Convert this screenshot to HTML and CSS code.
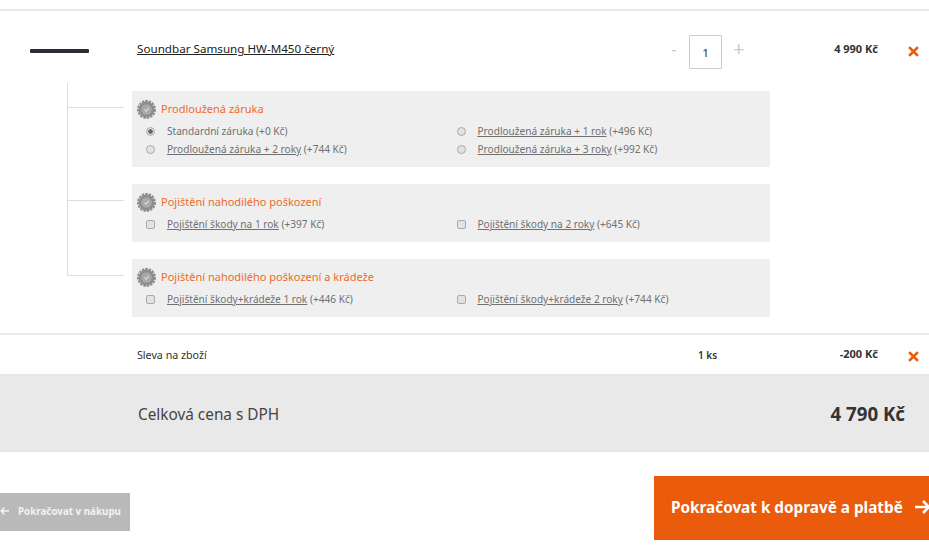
FILE: index.html
```html
<!DOCTYPE html>
<html lang="cs">
<head>
    <meta charset="UTF-8">
    <title>Košík</title>
    <link rel="stylesheet" href="styles.css">
</head>
<body>
    <svg class="sprite" width="0" height="0">
        <symbol id="gear" viewBox="0 0 20 20">
            <circle cx="10" cy="10" r="8.300" fill="#8d8d8d"/>
            <circle cx="10" cy="10" r="9" fill="none" stroke="#8d8d8d" stroke-width="2" stroke-dasharray="2.600 1.110"/>
            <circle cx="10" cy="10" r="5.500" fill="#a9a9a9"/>
            <path fill="none" stroke="#dcdcdc" stroke-width="1.100" d="M7.800 10l1.700 1.800 3-3.500"/>
        </symbol>
        <symbol id="cross" viewBox="0 0 12 12">
            <path fill="none" stroke="#ea5b0c" stroke-width="3" d="M1.200 1.200l9.600 9.600M10.800 1.200l-9.600 9.600"/>
        </symbol>
        <symbol id="arrow" viewBox="0 0 16 14">
            <path fill="none" stroke="currentColor" stroke-width="2.600" d="M0 7h14M8 1l6 6-6 6"/>
        </symbol>
    </svg>

    <section class="cart">
        <div class="item-row">
            <div class="item-thumb"><span class="soundbar"></span></div>
            <a class="item-name" href="#">Soundbar Samsung HW-M450 černý</a>
            <div class="qty">
                <span class="qty-btn qty-minus">-</span>
                <span class="qty-box">1</span>
                <span class="qty-btn">+</span>
            </div>
            <div class="item-price">4 990 Kč</div>
            <svg class="remove"><use href="#cross"/></svg>
        </div>

        <div class="services">
            <div class="tree">
                <span class="branch branch-1"></span>
                <span class="branch branch-2"></span>
                <span class="branch branch-3"></span>
            </div>
            <div class="panels">
                <div class="panel">
                    <h3 class="panel-title"><svg class="gear"><use href="#gear"/></svg>Prodloužená záruka</h3>
                    <div class="choices">
                        <label class="choice"><span class="mark radio on"></span><span>Standardní záruka (+0 Kč)</span></label>
                        <label class="choice"><span class="mark radio"></span><span><a href="#">Prodloužená záruka + 1 rok</a> (+496 Kč)</span></label>
                        <label class="choice"><span class="mark radio"></span><span><a href="#">Prodloužená záruka + 2 roky</a> (+744 Kč)</span></label>
                        <label class="choice"><span class="mark radio"></span><span><a href="#">Prodloužená záruka + 3 roky</a> (+992 Kč)</span></label>
                    </div>
                </div>
                <div class="panel">
                    <h3 class="panel-title"><svg class="gear"><use href="#gear"/></svg>Pojištění nahodilého poškození</h3>
                    <div class="choices">
                        <label class="choice"><span class="mark"></span><span><a href="#">Pojištění škody na 1 rok</a> (+397 Kč)</span></label>
                        <label class="choice"><span class="mark"></span><span><a href="#">Pojištění škody na 2 roky</a> (+645 Kč)</span></label>
                    </div>
                </div>
                <div class="panel">
                    <h3 class="panel-title"><svg class="gear"><use href="#gear"/></svg>Pojištění nahodilého poškození a krádeže</h3>
                    <div class="choices">
                        <label class="choice"><span class="mark"></span><span><a href="#">Pojištění škody+krádeže 1 rok</a> (+446 Kč)</span></label>
                        <label class="choice"><span class="mark"></span><span><a href="#">Pojištění škody+krádeže 2 roky</a> (+744 Kč)</span></label>
                    </div>
                </div>
            </div>
        </div>

        <div class="discount-row">
            <div class="discount-name">Sleva na zboží</div>
            <div class="discount-qty">1 ks</div>
            <div class="item-price">-200 Kč</div>
            <svg class="remove"><use href="#cross"/></svg>
        </div>

        <div class="total-row">
            <span>Celková cena s DPH</span>
            <strong class="total-price">4 790 Kč</strong>
        </div>
    </section>

    <div class="actions">
        <a class="btn-back" href="#"><svg class="btn-back-arrow"><use href="#arrow"/></svg>Pokračovat v nákupu</a>
        <a class="btn-next" href="#">Pokračovat k dopravě a platbě<svg class="btn-next-arrow"><use href="#arrow"/></svg></a>
    </div>
</body>
</html>
```

FILE: styles.css
```css
body {
    background: #fff;
    color: #333;
    font-family: 'Noto Sans', 'Open Sans', sans-serif;
    margin: 0;
    height: 552px;
    overflow: hidden;
    padding-top: 9px;
    box-sizing: border-box;
}

a {
    color: inherit;
}

.sprite {
    display: block;
    height: 0;
}

.cart {
    border-top: 2px solid #e8e8e8;
}

.item-row {
    display: flex;
    align-items: center;
    height: 72px;
}

.item-thumb {
    width: 137px;
    flex: none;
}

.soundbar {
    display: block;
    width: 59px;
    height: 4px;
    margin-left: 30px;
    margin-top: 7px;
    background: #2b2d36;
    border-radius: 1px;
}

.item-name {
    width: 528px;
    font-size: 11.650px;
    color: #222;
    margin-top: 3px;
    flex: none;
    text-underline-offset: 1px;
}

.qty {
    display: flex;
    align-items: center;
    flex: none;
    margin-left: 1px;
    margin-top: 10px;
}

.qty-btn {
    color: #c9c9c9;
    font-size: 20px;
    line-height: 20px;
    margin-top: -7px;
}

.qty-minus {
    width: 16px;
    margin-right: 7px;
    text-align: center;
    font-size: 17px;
}

.qty-box {
    width: 31px;
    height: 32px;
    border: 1px solid #ccc;
    border-radius: 1px;
    display: flex;
    align-items: center;
    justify-content: center;
    font-size: 11.500px;
    font-weight: 500;
    color: #456;
    margin-right: 11px;
}

.item-price {
    width: 74px;
    margin-right: 30px;
    text-align: right;
    font-size: 11px;
    font-weight: 700;
    color: #333;
    flex: none;
    margin-left: auto;
}

.item-row .item-price {
    margin-top: 3px;
}

.remove {
    width: 11px;
    height: 11px;
    margin-right: 10px;
    flex: none;
}

.item-row .remove {
    margin-top: 8px;
}

.services {
    display: flex;
    border-bottom: 2px solid #eaeaea;
    height: 250px;
    padding-left: 67px;
}

.tree {
    width: 57px;
    flex: none;
    display: flex;
    flex-direction: column;
}

.branch {
    display: block;
    border-left: 1px solid #ddd;
    border-bottom: 1px solid #ddd;
    flex: none;
}

.branch-1 {
    height: 24px;
}

.branch-2 {
    height: 92px;
}

.branch-3 {
    height: 74px;
}

.panels {
    width: 638px;
    margin-left: 8px;
    padding-top: 8px;
    display: flex;
    flex-direction: column;
    gap: 17px;
}

.panel {
    background: #efefef;
    padding: 8px 0 9px 5px;
}

.panel-title {
    display: flex;
    align-items: center;
    margin: 0 0 3px;
    font-size: 11px;
    line-height: 20px;
    font-weight: 400;
    color: #ee6a2b;
}

.gear {
    width: 19px;
    height: 19px;
    margin-right: 5px;
    flex: none;
}

.choices {
    display: grid;
    grid-template-columns: 310.500px 1fr;
}

.choice {
    display: flex;
    align-items: center;
    height: 18px;
    font-size: 10.100px;
    color: #707070;
}

.mark {
    box-sizing: border-box;
    width: 9px;
    height: 9px;
    margin: 1px 12px 0 9px;
    background: #e2e2e2;
    border: 1px solid #aaa;
    border-radius: 2px;
    flex: none;
}

.radio {
    border-radius: 50%;
}

.radio.on {
    background: radial-gradient(circle, #666 0 2px, #e2e2e2 2.500px);
}

.discount-row {
    display: flex;
    align-items: center;
    height: 39px;
    border-bottom: 2px solid #e6e6e6;
    font-size: 10px;
    color: #333;
}

.discount-name {
    margin-left: 137px;
    width: 561px;
    font-size: 10.700px;
}

.discount-qty {
    font-weight: 600;
}

.discount-row .item-price {
    margin-top: -2px;
}

.discount-row .remove {
    margin-top: 4px;
}

.total-row {
    display: flex;
    align-items: center;
    justify-content: space-between;
    height: 75px;
    padding: 0 24px 0 138px;
    background: #e9e9e9;
    border-bottom: 1px solid #e2e2e2;
    font-size: 15.350px;
    color: #444;
}

.total-price {
    font-size: 18.700px;
    font-weight: 700;
    color: #333;
}

.actions {
    display: flex;
    align-items: flex-start;
    justify-content: space-between;
    padding-top: 24px;
}

.btn-back {
    display: flex;
    align-items: center;
    width: 130px;
    height: 38px;
    margin-top: 17px;
    padding-bottom: 2px;
    box-sizing: border-box;
    background: #b9b9b9;
    color: #f2f2f2;
    font-size: 9.800px;
    font-weight: 700;
    text-decoration: none;
}

.btn-back-arrow {
    width: 9px;
    height: 8px;
    margin-right: 9px;
    transform: scaleX(-1);
    flex: none;
}

.btn-next {
    display: flex;
    align-items: center;
    box-sizing: border-box;
    width: 275px;
    height: 64px;
    padding: 0 0 3px 17px;
    background: #ea5b0c;
    color: #fff;
    font-size: 15.300px;
    font-weight: 700;
    text-decoration: none;
    white-space: nowrap;
    overflow: hidden;
}

.btn-next-arrow {
    width: 16px;
    height: 14px;
    margin-left: 12px;
    flex: none;
}
```
